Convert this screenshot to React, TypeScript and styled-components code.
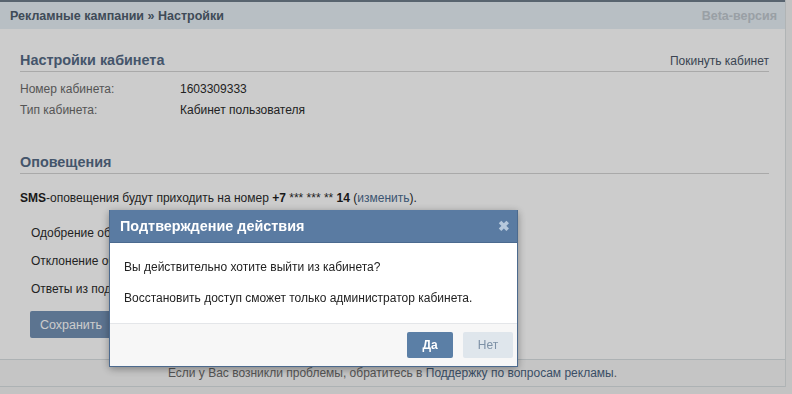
import React from 'react'
import styled, { createGlobalStyle } from 'styled-components';

const GlobalStyle = createGlobalStyle`
    body {
        margin: 0;
        background: #f4f4f4;
        font-family: "Liberation Sans", Arial, sans-serif;
        font-size: 12px;
        color: #2b2b2b;
    }
`;

interface rowProps{
    label: string;
    value: string;
}

const InfoRow: React.FC<rowProps> = ({ label, value }) => {
  return (
    <Row>
        <Label>{label}</Label>
        <Value>{value}</Value>
    </Row>
  )
}

const App: React.FC = () => {
  return (
    <>
    <GlobalStyle />
    <Page>
        <TopBar>
            <Crumbs>Рекламные кампании » Настройки</Crumbs>
            <Beta>Beta-версия</Beta>
        </TopBar>
        <Content>
            <SectionHead>
                <Title>Настройки кабинета</Title>
                <HeadLink>Покинуть кабинет</HeadLink>
            </SectionHead>
            <Rows>
                <InfoRow label="Номер кабинета:" value="1603309333" />
                <InfoRow label="Тип кабинета:" value="Кабинет пользователя" />
            </Rows>
            <SectionHead $top={31}>
                <Title>Оповещения</Title>
            </SectionHead>
            <Sms>
                <b>SMS</b>-оповещения будут приходить на номер <b>+7</b> *** *** ** <b>14</b> (<Edit>изменить</Edit>).
            </Sms>
            <Options>
                <Option>Одобрение объявлений</Option>
                <Option>Отклонение объявлений</Option>
                <Option>Ответы из поддержки</Option>
            </Options>
            <SaveButton>Сохранить</SaveButton>
        </Content>
        <Footer>
            Если у Вас возникли проблемы, обратитесь в&nbsp;<FootLink>Поддержку по вопросам рекламы</FootLink>.
        </Footer>
    </Page>
    <Overlay />
    <Box>
        <BoxHead>
            <span>Подтверждение действия</span>
            <Close>✖</Close>
        </BoxHead>
        <BoxBody>
            <p>Вы действительно хотите выйти из кабинета?</p>
            <p>Восстановить доступ сможет только администратор кабинета.</p>
        </BoxBody>
        <BoxFoot>
            <Btn $primary>Да</Btn>
            <Btn>Нет</Btn>
        </BoxFoot>
    </Box>
    </>
  )
}

export default App;

const Page = styled.div`
    width: 785px;
    border-right: 1px solid #dde1e3;
    background: #fff;
`;
const TopBar = styled.div`
    height: 27px;
    border-top: 2px solid #6f7e8b;
    background: #e7eff5;
    display: flex;
    justify-content: space-between;
    align-items: center;
    padding: 0 8px 0 10px;
`;
const Crumbs = styled.div`
    font-size: 12.5px;
    font-weight: bold;
    color: #4f5e6e;
`;
const Beta = styled.div`
    font-size: 12.5px;
    font-weight: bold;
    color: #c0c8cf;
`;
const Content = styled.div`
    padding: 20px 16px 20px 20px;
    height: 290px;
`;
const SectionHead = styled.div<{ $top?: number }>`
    margin-top: ${p => p.$top || 0}px;
    display: flex;
    justify-content: space-between;
    align-items: flex-end;
    border-bottom: 1px solid #d4d4d4;
    padding-bottom: 3px;
    height: 19px;
`;
const Title = styled.div`
    font-size: 14.4px;
    font-weight: bold;
    color: #566b86;
`;
const HeadLink = styled.div`
    color: #4a5667;
    cursor: pointer;
`;
const Rows = styled.div`
    margin-top: 6px;
    display: flex;
    flex-direction: column;
`;
const Row = styled.div`
    display: flex;
    height: 21px;
    align-items: center;
`;
const Label = styled.div`
    width: 160px;
    color: #6b6b6b;
`;
const Value = styled.div`
    color: #2b2b2b;
`;
const Sms = styled.div`
    margin-top: 17px;
    color: #2b2b2b;
    b{
        color: #1e1e1e;
    }
`;
const Edit = styled.span`
    color: #4a6a8e;
`;
const Options = styled.div`
    margin-top: 14px;
    padding-left: 11px;
    display: flex;
    flex-direction: column;
`;
const Option = styled.div`
    height: 28px;
    display: flex;
    align-items: center;
    color: #2b2b2b;
`;
const SaveButton = styled.div`
    margin: 8px 0 0 10px;
    width: 96px;
    height: 27px;
    border-radius: 2px;
    background: #7391b5;
    color: #fff;
    font-size: 12.5px;
    display: flex;
    align-items: center;
    justify-content: center;
    padding-right: 14px;
    box-sizing: border-box;
`;
const Footer = styled.div`
    border-top: 1px solid #d9dfe2;
    border-bottom: 1px solid #d9dfe2;
    background: #f7f7f7;
    height: 26px;
    display: flex;
    align-items: center;
    justify-content: center;
    color: #6b6b6b;
`;
const FootLink = styled.span`
    color: #4a6380;
`;
const Overlay = styled.div`
    position: fixed;
    inset: 0;
    background: rgba(0, 0, 0, 0.2);
`;
const Box = styled.div`
    position: fixed;
    left: 109px;
    top: 210px;
    width: 409px;
    background: #fff;
    box-shadow: 0 2px 8px rgba(0, 0, 0, 0.35);
    border: 1px solid #4c6a8e;
    border-top: none;
    box-sizing: border-box;
`;
const BoxHead = styled.div`
    height: 33px;
    background: #5a7ba2;
    border-bottom: 1px solid #4b6a8f;
    box-sizing: border-box;
    display: flex;
    align-items: center;
    justify-content: space-between;
    padding: 0 7px 0 10px;
    color: #fff;
    font-size: 14.4px;
    font-weight: bold;
`;
const Close = styled.span`
    color: #b6c8dc;
    font-size: 14px;
`;
const BoxBody = styled.div`
    height: 80px;
    padding: 17px 14px 0;
    box-sizing: border-box;
    font-size: 12px;
    color: #222;
    p{
        margin: 0 0 17px;
        line-height: 14px;
    }
`;
const BoxFoot = styled.div`
    height: 42px;
    background: #f7f7f7;
    border-top: 1px solid #e4e6e9;
    display: flex;
    justify-content: flex-end;
    align-items: center;
    gap: 10px;
    padding-right: 4px;
`;
const Btn = styled.div<{ $primary?: boolean }>`
    width: ${p => p.$primary ? 46 : 50}px;
    height: 26px;
    border-radius: 2px;
    display: flex;
    align-items: center;
    justify-content: center;
    font-size: 12px;
    font-weight: ${p => p.$primary ? 'bold' : 'normal'};
    background: ${p => p.$primary ? '#5b7fa6' : '#dfe6ec'};
    color: ${p => p.$primary ? '#fff' : '#7d91a6'};
    cursor: pointer;
`;
